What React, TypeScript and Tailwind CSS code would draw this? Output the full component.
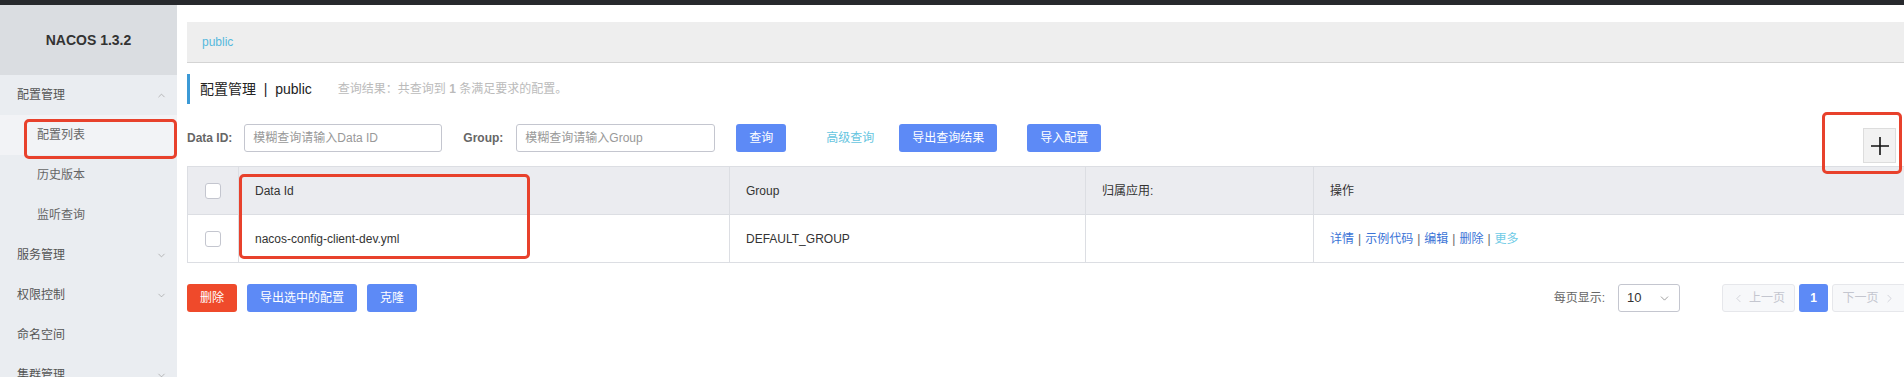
import { ChevronDown, ChevronLeft, ChevronRight, ChevronUp } from "lucide-react";

const FONT = "font-['Liberation_Sans','Noto_Sans_CJK_SC',sans-serif]";

const MENU = [
  { label: "配置管理", level: 0, open: true },
  { label: "配置列表", level: 1, active: true },
  { label: "历史版本", level: 1 },
  { label: "监听查询", level: 1 },
  { label: "服务管理", level: 0, open: false },
  { label: "权限控制", level: 0, open: false },
  { label: "命名空间", level: 0 },
  { label: "集群管理", level: 0, open: false },
];

function Sidebar() {
  return (
    <aside className="relative flex w-[177px] shrink-0 flex-col bg-[#eaedf1]">
      <div className="flex h-[70px] shrink-0 items-center justify-center bg-[#dadde1] text-[14px] font-bold text-[#333]">
        NACOS 1.3.2
      </div>
      {MENU.map((m) => (
        <div
          key={m.label}
          className={`flex h-[40px] shrink-0 items-center justify-between pr-[10px] text-[12px] ${
            m.level === 0 ? "pl-[17px] text-[#555]" : "pl-[37px] text-[#666]"
          } ${m.active ? "bg-[#f2f3f6]" : ""}`}
        >
          <span>{m.label}</span>
          {m.open === true && <ChevronUp size={11} strokeWidth={1.4} className="text-[#999]" />}
          {m.open === false && <ChevronDown size={11} strokeWidth={1.4} className="text-[#999]" />}
        </div>
      ))}
      <div className="pointer-events-none absolute left-[24px] top-[114px] h-[40px] w-[153px] rounded-[5px] border-[3px] border-[#e8412c]" />
    </aside>
  );
}

function BlueButton({ children, w }: { children: React.ReactNode; w: string }) {
  return (
    <button className={`flex h-[28px] ${w} items-center justify-center rounded-[3px] bg-[#5d8af6] text-[12px] text-white`}>
      {children}
    </button>
  );
}

function Checkbox() {
  return <span className="block h-[16px] w-[16px] rounded-[3px] border border-[#c4c6cf] bg-white" />;
}

function Table() {
  return (
    <div className="relative mt-[14px] border border-[#dcdee3] text-[12px] text-[#333]">
      <div className="flex h-[47px] bg-[#ebecf0]">
        <div className="flex w-[51px] shrink-0 items-center justify-center border-r border-[#dcdee3]">
          <Checkbox />
        </div>
        <div className="flex w-[491px] shrink-0 items-center border-r border-[#dcdee3] pl-[16px]">Data Id</div>
        <div className="flex w-[356px] shrink-0 items-center border-r border-[#dcdee3] pl-[16px]">Group</div>
        <div className="flex w-[228px] shrink-0 items-center border-r border-[#dcdee3] pl-[16px]">归属应用:</div>
        <div className="flex flex-1 items-center pl-[16px]">操作</div>
      </div>
      <div className="flex h-[48px] border-t border-[#dcdee3] bg-white">
        <div className="flex w-[51px] shrink-0 items-center justify-center border-r border-[#dcdee3]">
          <Checkbox />
        </div>
        <div className="flex w-[491px] shrink-0 items-center border-r border-[#dcdee3] pl-[16px]">
          nacos-config-client-dev.yml
        </div>
        <div className="flex w-[356px] shrink-0 items-center border-r border-[#dcdee3] pl-[16px]">DEFAULT_GROUP</div>
        <div className="w-[228px] shrink-0 border-r border-[#dcdee3]" />
        <div className="flex flex-1 items-center gap-[4px] pl-[16px] text-[#3a73d6]">
          <span>详情</span>
          <span className="text-[#666]">|</span>
          <span>示例代码</span>
          <span className="text-[#666]">|</span>
          <span>编辑</span>
          <span className="text-[#666]">|</span>
          <span>删除</span>
          <span className="text-[#666]">|</span>
          <span className="text-[#6fcbe6]">更多</span>
        </div>
      </div>
      <div className="pointer-events-none absolute left-[51px] top-[7px] h-[85px] w-[291px] rounded-[5px] border-[3px] border-[#e8412c]" />
    </div>
  );
}

export default function App() {
  return (
    <div className={`flex h-[377px] w-[1904px] flex-col overflow-hidden bg-white ${FONT}`}>
      <div className="h-[5px] shrink-0 bg-[#27292d]" />
      <div className="flex flex-1 overflow-hidden">
        <Sidebar />
        <main className="relative w-[1729px] shrink-0 pl-[10px]">
          <div className="mt-[17px] flex h-[41px] items-center border-b border-[#d4d4d4] bg-[#eeeeee] pl-[15px] text-[12px] text-[#56b9dd]">
            public
          </div>

          <div className="mt-[11px] flex h-[30px] items-center border-l-[3px] border-[#3c9ad6] pl-[10px]">
            <span className="text-[14px] text-[#222]">配置管理&nbsp;&nbsp;|&nbsp;&nbsp;public</span>
            <span className="ml-[26px] text-[12px] text-[#bbb]">
              查询结果：共查询到 <b>1</b> 条满足要求的配置。
            </span>
          </div>

          <div className="mt-[20px] flex h-[28px] items-center text-[12px]">
            <span className="font-bold text-[#666]">Data ID:</span>
            <div className="ml-[12px] flex h-[28px] w-[198px] items-center rounded-[3px] border border-[#c4c6cf] pl-[8px] text-[#999]">
              模糊查询请输入Data ID
            </div>
            <span className="ml-[21px] font-bold text-[#666]">Group:</span>
            <div className="ml-[13px] flex h-[28px] w-[199px] items-center rounded-[3px] border border-[#c4c6cf] pl-[8px] text-[#999]">
              模糊查询请输入Group
            </div>
            <div className="ml-[21px]">
              <BlueButton w="w-[50px]">查询</BlueButton>
            </div>
            <span className="ml-[40px] text-[#66c5e0]">高级查询</span>
            <div className="ml-[25px]">
              <BlueButton w="w-[98px]">导出查询结果</BlueButton>
            </div>
            <div className="ml-[30px]">
              <BlueButton w="w-[74px]">导入配置</BlueButton>
            </div>
          </div>

          <Table />

          <div className="mt-[21px] flex h-[28px] items-center text-[12px]">
            <button className="flex h-[28px] w-[50px] items-center justify-center rounded-[3px] bg-[#ef4a2b] text-white">
              删除
            </button>
            <div className="ml-[10px]">
              <BlueButton w="w-[110px]">导出选中的配置</BlueButton>
            </div>
            <div className="ml-[10px]">
              <BlueButton w="w-[50px]">克隆</BlueButton>
            </div>
            <div className="ml-auto flex items-center">
              <span className="text-[#666]">每页显示:</span>
              <div className="ml-[13px] flex h-[28px] w-[62px] items-center justify-between rounded-[3px] border border-[#c4c6cf] pl-[8px] pr-[8px] text-[#333]">
                <span className="text-[13px]">10</span>
                <ChevronDown size={13} strokeWidth={1.3} className="text-[#777]" />
              </div>
              <div className="ml-[42px] flex h-[28px] w-[73px] items-center justify-center gap-[4px] rounded-[3px] border border-[#e6e7eb] bg-[#f7f8fa] text-[#c4c6cf]">
                <ChevronLeft size={13} strokeWidth={1.3} />
                <span>上一页</span>
              </div>
              <div className="ml-[4px] flex h-[28px] w-[29px] items-center justify-center rounded-[3px] bg-[#5d8af6] font-bold text-white">
                1
              </div>
              <div className="ml-[4px] flex h-[28px] w-[74px] items-center justify-center gap-[4px] rounded-[3px] border border-[#e6e7eb] bg-[#f7f8fa] text-[#c4c6cf]">
                <span>下一页</span>
                <ChevronRight size={13} strokeWidth={1.3} />
              </div>
            </div>
          </div>

          <button className="absolute left-[1686px] top-[123px] flex h-[35px] w-[33px] items-center justify-center border border-[#dddddd] bg-[#f2f2f2]">
            <svg width="20" height="20" viewBox="0 0 20 20" aria-hidden>
              <path d="M10 1V19M1 10H19" stroke="#111" strokeWidth="1.6" />
            </svg>
          </button>
          <div className="pointer-events-none absolute left-[1645px] top-[107px] h-[62px] w-[80px] rounded-[5px] border-[3px] border-[#e8412c]" />
        </main>
      </div>
    </div>
  );
}
